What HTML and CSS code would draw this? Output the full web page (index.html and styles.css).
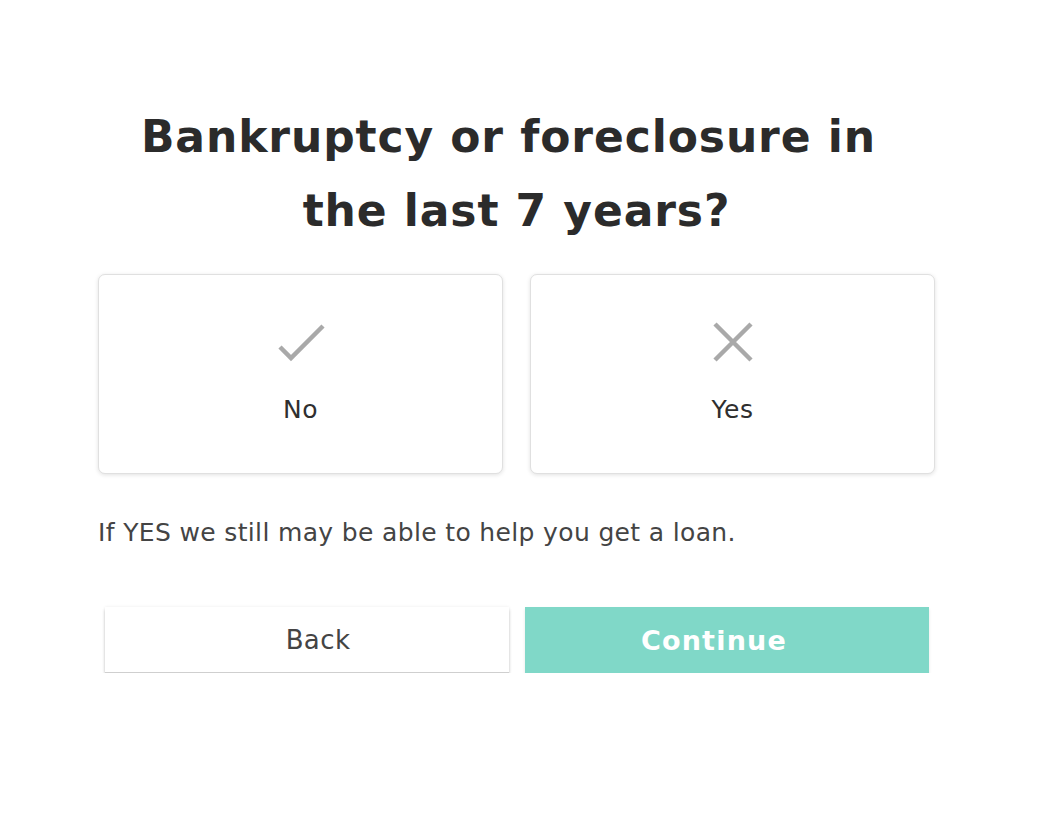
FILE: index.html
```html
<!DOCTYPE html>
<html lang="en">
<head>
<meta charset="utf-8">
<title>Bankruptcy or foreclosure</title>
<link rel="stylesheet" href="styles.css">
</head>
<body>
<main class="page">
  <h1 class="title">Bankruptcy or foreclosure in&nbsp;<br>the last 7 years?</h1>
  <div class="options">
    <button class="card" type="button">
      <svg class="icon" width="48" height="40" viewBox="0 0 48 40" aria-hidden="true">
        <path d="M3 25 L14 36 L46 4" fill="none" stroke="#a9a9a9" stroke-width="4.5"/>
      </svg>
      <span class="card-label">No</span>
    </button>
    <button class="card" type="button">
      <svg class="icon" width="48" height="40" viewBox="0 0 48 40" aria-hidden="true">
        <path d="M6 2 L42 38 M42 2 L6 38" fill="none" stroke="#a9a9a9" stroke-width="4.5"/>
      </svg>
      <span class="card-label">Yes</span>
    </button>
  </div>
  <p class="note">If YES we still may be able to help you get a loan.</p>
  <div class="actions">
    <button class="btn btn-back" type="button">Back</button>
    <button class="btn btn-continue" type="button">Continue</button>
  </div>
</main>
</body>
</html>
```

FILE: styles.css
```css
html, body {
  margin: 0;
  padding: 0;
  background: #ffffff;
}

body {
  font-family: "DejaVu Sans", "Open Sans", Arial, sans-serif;
  color: #333333;
}

.page {
  width: 837px;
  margin-left: 98px;
  padding-top: 100px;
}

.title {
  margin: 0;
  text-align: center;
  font-size: 44px;
  line-height: 74px;
  font-weight: 700;
  color: #2b2b2b;
  letter-spacing: 0.9px;
}

.options {
  display: grid;
  grid-template-columns: 1fr 1fr;
  gap: 27px;
  margin-top: 26px;
}

.card {
  height: 200px;
  box-sizing: border-box;
  display: flex;
  flex-direction: column;
  align-items: center;
  padding: 47px 0 0;
  background: #ffffff;
  border: 1px solid #e0e0e0;
  border-radius: 7px;
  box-shadow: 0 1px 4px rgba(0, 0, 0, 0.12);
  font-family: inherit;
  cursor: pointer;
}

.icon {
  display: block;
}

.card-label {
  margin-top: 33px;
  font-size: 25px;
  line-height: 30px;
  color: #2f2f2f;
  letter-spacing: 0.6px;
}

.note {
  margin: 44px 0 0;
  font-size: 25px;
  line-height: 30px;
  color: #444444;
  letter-spacing: 0.35px;
}

.actions {
  display: grid;
  grid-template-columns: 1fr 1fr;
  gap: 16px;
  padding: 0 6px 0 7px;
  margin-top: 59px;
}

.btn {
  height: 66px;
  border: none;
  font-family: inherit;
  cursor: pointer;
}

.btn-back {
  padding: 0 0 0 22px;
  background: #ffffff;
  color: #444444;
  font-size: 26px;
  letter-spacing: 0.4px;
  border-bottom: 1px solid #cfcfcf;
  box-shadow: 0 3px 3px rgba(0, 0, 0, 0.2), 0 0 3px rgba(0, 0, 0, 0.08);
}

.btn-continue {
  padding: 0 26px 0 0;
  background: #80d8c8;
  color: #ffffff;
  font-weight: 700;
  font-size: 27px;
  letter-spacing: 1.2px;
  box-shadow: 0 2px 3px rgba(0, 0, 0, 0.1);
}
```
